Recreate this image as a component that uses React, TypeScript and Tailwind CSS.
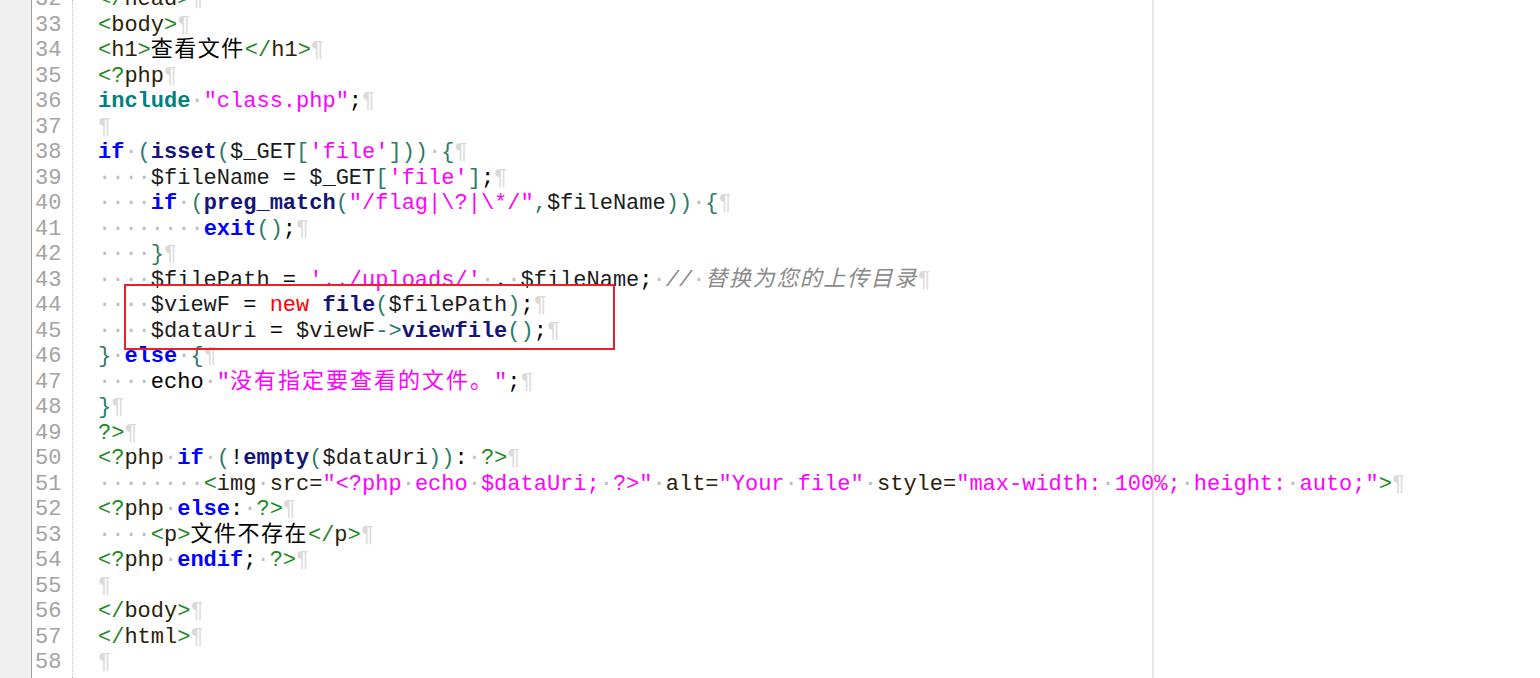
import React from "react";

type Seg = [string, string] | string;

const S: Record<string, string> = {
  g: "text-[#1e8a1e]",
  t: "text-[#2a2108]",
  v: "text-[#1c1c1c]",
  p: "text-[#2c7a68]",
  k: "text-[#0000ff] font-bold",
  n: "text-[#14147a] font-bold",
  i: "text-[#008080] font-bold",
  s: "text-[#ff00ff]",
  r: "text-[#ff0000]",
  c: "text-[#8a8a8a] italic",
  o: "text-black",
  cj: "text-black font-['Noto_Sans_CJK_SC',sans-serif] tracking-[1.5px] leading-[14px]",
  cs: "text-[#ff00ff] font-['Noto_Sans_CJK_SC',sans-serif] tracking-[2px] leading-[14px]",
  cc: "text-[#8a8a8a] italic font-['Noto_Sans_CJK_SC',sans-serif] tracking-[1.6px] leading-[14px]",
};

const I4 = "····";
const I8 = "········";

const lines: [number, Seg[]][] = [
  [32, [["g", "</"], ["t", "head"], ["g", ">"]]],
  [33, [["g", "<"], ["t", "body"], ["g", ">"]]],
  [34, [["g", "<"], ["t", "h1"], ["g", ">"], ["cj", "查看文件"], ["g", "</"], ["t", "h1"], ["g", ">"]]],
  [35, [["g", "<?"], ["t", "php"]]],
  [36, [["i", "include"], "·", ["s", '"class.php"'], ["o", ";"]]],
  [37, []],
  [38, [["k", "if"], "·", ["p", "("], ["n", "isset"], ["p", "("], ["v", "$_GET"], ["p", "["], ["s", "'file'"], ["p", "]))"], "·", ["p", "{"]]],
  [39, [I4, ["v", "$fileName"], ["o", " = "], ["v", "$_GET"], ["p", "["], ["s", "'file'"], ["p", "]"], ["o", ";"]]],
  [40, [I4, ["k", "if"], "·", ["p", "("], ["n", "preg_match"], ["p", "("], ["s", '"/flag|\\?|\\*/"'], ["p", ","], ["v", "$fileName"], ["p", "))"], "·", ["p", "{"]]],
  [41, [I8, ["k", "exit"], ["p", "()"], ["o", ";"]]],
  [42, [I4, ["p", "}"]]],
  [43, [I4, ["v", "$filePath"], ["o", " = "], ["s", "'../uploads/'"], "·", ["o", "."], "·", ["v", "$fileName"], ["o", ";"], "·", ["c", "//·"], ["cc", "替换为您的上传目录"]]],
  [44, [I4, ["v", "$viewF"], ["o", " = "], ["r", "new"], ["o", " "], ["n", "file"], ["p", "("], ["v", "$filePath"], ["p", ")"], ["o", ";"]]],
  [45, [I4, ["v", "$dataUri"], ["o", " = "], ["v", "$viewF"], ["p", "->"], ["n", "viewfile"], ["p", "()"], ["o", ";"]]],
  [46, [["p", "}"], "·", ["k", "else"], "·", ["p", "{"]]],
  [47, [I4, ["o", "echo"], "·", ["s", '"'], ["cs", "没有指定要查看的文件。"], ["s", '"'], ["o", ";"]]],
  [48, [["p", "}"]]],
  [49, [["g", "?>"]]],
  [50, [["g", "<?"], ["t", "php"], "·", ["k", "if"], "·", ["p", "("], ["o", "!"], ["n", "empty"], ["p", "("], ["v", "$dataUri"], ["p", "))"], ["o", ":"], "·", ["g", "?>"]]],
  [51, [I8, ["g", "<"], ["t", "img"], "·", ["t", "src="], ["s", '"<?php·echo·$dataUri;·?>"'], "·", ["t", "alt="], ["s", '"Your·file"'], "·", ["t", "style="], ["s", '"max-width:·100%;·height:·auto;"'], ["g", ">"]]],
  [52, [["g", "<?"], ["t", "php"], "·", ["k", "else"], ["o", ":"], "·", ["g", "?>"]]],
  [53, [I4, ["g", "<"], ["t", "p"], ["g", ">"], ["cj", "文件不存在"], ["g", "</"], ["t", "p"], ["g", ">"]]],
  [54, [["g", "<?"], ["t", "php"], "·", ["k", "endif"], ["o", ";"], "·", ["g", "?>"]]],
  [55, []],
  [56, [["g", "</"], ["t", "body"], ["g", ">"]]],
  [57, [["g", "</"], ["t", "html"], ["g", ">"]]],
  [58, []],
];

function renderText(text: string, cls: string, key: string) {
  const parts = text.split("·");
  const out: React.ReactNode[] = [];
  parts.forEach((p, idx) => {
    if (p) out.push(<span key={key + "t" + idx} className={cls}>{p}</span>);
    if (idx < parts.length - 1)
      out.push(
        <span key={key + "d" + idx} className="text-[#bdbdbd] font-normal not-italic">·</span>
      );
  });
  return out;
}

function Line({ segs }: { segs: Seg[] }) {
  return (
    <div className="h-[25.5px] whitespace-pre">
      {segs.map((s, i) =>
        typeof s === "string"
          ? renderText(s, "", "s" + i)
          : renderText(s[1], S[s[0]], "s" + i)
      )}
      <span className="text-[#dadada]">¶</span>
    </div>
  );
}

export default function App() {
  return (
    <div className="relative h-[678px] w-[1540px] overflow-hidden bg-white font-['Liberation_Mono',monospace] text-[22px] leading-[25.5px]">
      <div className="flex h-full">
        <div className="w-[32px] shrink-0 bg-[#f0f0f0] border-r border-[#a0a0a0]" />
        <div className="w-[40px] shrink-0 pl-[3px] text-[#a3a3a3] mt-[-13px]">
          {lines.map(([n]) => (
            <div key={n} className="h-[25.5px]">{n}</div>
          ))}
        </div>
        <div className="w-0 shrink-0 border-l border-dotted border-[#c4c4c4]" />
        <div className="w-[1081px] shrink-0 border-r-2 border-[#e6e6e6] pl-[25px] mt-[-13px] h-[691px]">
          {lines.map(([n, segs]) => (
            <Line key={n} segs={segs} />
          ))}
        </div>
        <div className="flex-1" />
      </div>
      <div className="absolute left-[124px] top-[284px] h-[66px] w-[491px] border-2 border-[#e8202a]" />
    </div>
  );
}
